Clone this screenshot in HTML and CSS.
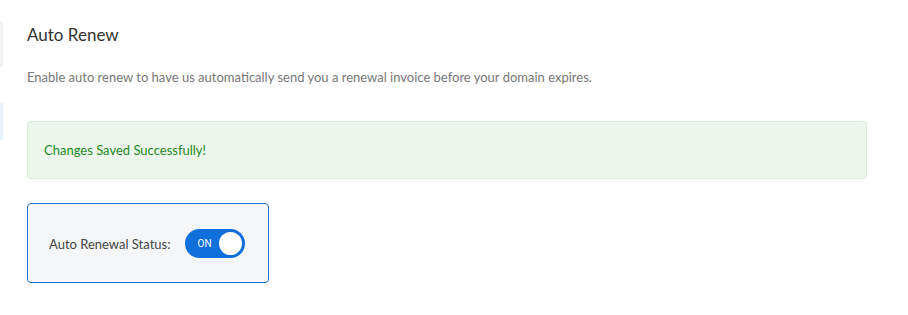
FILE: index.html
```html
<!DOCTYPE html>
<html lang="en">
<head>
  <meta charset="UTF-8">
  <title>Auto Renew</title>
  <link rel="stylesheet" href="styles.css">
</head>
<body>
  <div class="layout">
    <aside class="sidebar">
      <div class="side-panel"></div>
      <div class="side-active"></div>
    </aside>
    <main class="content">
      <h3 class="title">Auto Renew</h3>
      <p class="intro">Enable auto renew to have us automatically send you a renewal invoice before your domain expires.</p>
      <div class="alert-success">Changes Saved Successfully!</div>
      <div class="status-card">
        <span class="status-label">Auto Renewal Status:</span>
        <button class="switch" type="button">
          <span class="switch-text">ON</span>
          <span class="switch-knob"></span>
        </button>
      </div>
    </main>
  </div>
</body>
</html>
```

FILE: styles.css
```css
/* General Styles */
body {
  margin: 0;
  background: #fff;
  font-family: 'Lato', 'Open Sans', sans-serif;
  color: #333;
}

.layout {
  display: flex;
}

.sidebar {
  width: 3px;
  flex-shrink: 0;
}

.side-panel {
  margin-top: 22px;
  height: 45px;
  background: #f2f2f2;
}

.side-active {
  margin-top: 36px;
  height: 37px;
  background: #eaf3fc;
}

.content {
  flex: 1;
  padding: 24px 41px 0 24px;
}

.title {
  margin: 0;
  font-size: 17px;
  font-weight: 400;
  line-height: 22px;
  color: #333;
}

.intro {
  margin: 21px 0 0;
  font-size: 13px;
  line-height: 20px;
  color: #777;
}

.alert-success {
  margin-top: 34px;
  padding: 20px 16px 19px;
  background: #edf6ec;
  border: 1px solid #dcedd9;
  border-radius: 4px;
  color: #1f8a1f;
  font-size: 13px;
  line-height: 17px;
}

.status-card {
  display: inline-flex;
  align-items: center;
  gap: 15px;
  margin-top: 24px;
  padding: 25px 23px 24px 21px;
  background: #f5f6f8;
  border: 1px solid #1a73d9;
  border-radius: 4px;
}

.status-label {
  font-size: 13px;
  color: #444;
}

.switch {
  display: flex;
  align-items: center;
  justify-content: space-between;
  width: 60px;
  height: 29px;
  padding: 0 3px 0 12px;
  border: none;
  border-radius: 15px;
  background: #0f6fdb;
  cursor: pointer;
}

.switch-text {
  color: #fff;
  font-family: 'Roboto', sans-serif;
  font-size: 10px;
  letter-spacing: 0.3px;
}

.switch-knob {
  width: 23px;
  height: 23px;
  border-radius: 50%;
  background: #fff;
}
```
